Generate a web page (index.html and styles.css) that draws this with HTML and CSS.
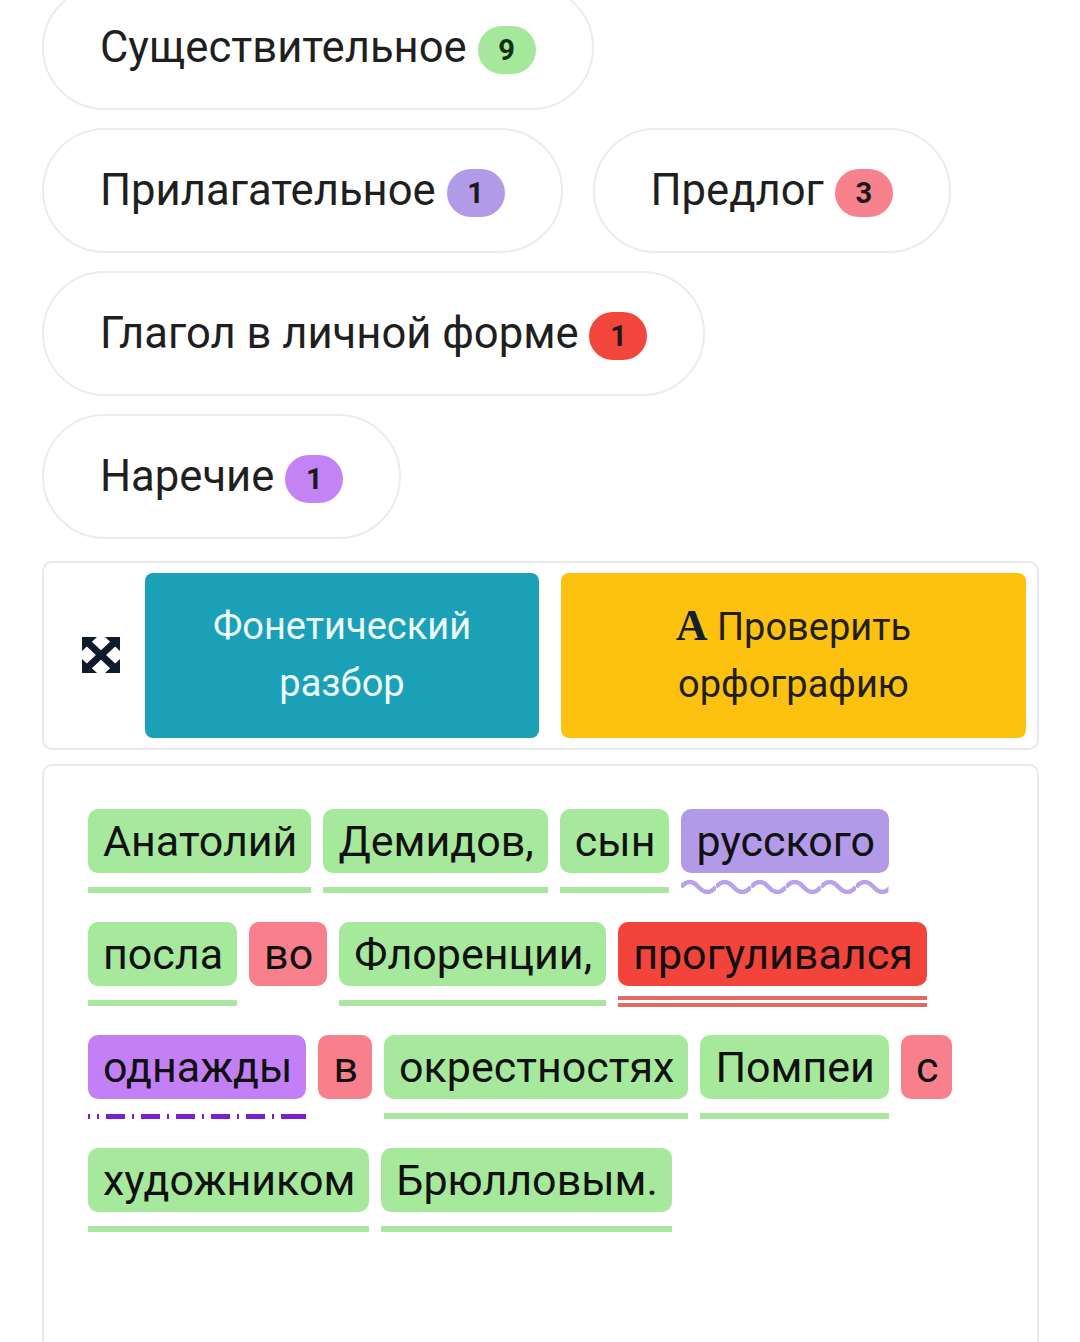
FILE: index.html
```html
<!DOCTYPE html>
<html lang="ru">
<head>
<meta charset="utf-8">
<title>Разбор</title>
<link rel="stylesheet" href="styles.css">
</head>
<body>
<div class="page">
  <div class="pills">
    <div class="pill">Существительное <span class="badge b-noun">9</span></div>
    <div class="pill">Прилагательное <span class="badge b-adj">1</span></div>
    <div class="pill">Предлог <span class="badge b-prep">3</span></div>
    <div class="pill">Глагол в личной форме <span class="badge b-verb">1</span></div>
    <div class="pill">Наречие <span class="badge b-adv">1</span></div>
  </div>

  <div class="toolbar">
    <div class="tool-icon">
      <svg width="38" height="36" viewBox="0 0 38 36">
        <g fill="#0f1b2d">
          <polygon points="0,0 15,0 0,14"/>
          <polygon points="38,0 23,0 38,14"/>
          <polygon points="0,36 15,36 0,22"/>
          <polygon points="38,36 23,36 38,22"/>
        </g>
        <g stroke="#0f1b2d" stroke-width="7" stroke-linecap="butt">
          <line x1="4" y1="4" x2="34" y2="32"/>
          <line x1="34" y1="4" x2="4" y2="32"/>
        </g>
      </svg>
    </div>
    <div class="btn btn-blue"><span class="btn-label">Фонетический<br>разбор</span></div>
    <div class="btn btn-yellow"><span class="btn-label"><span class="serif-a">A</span> Проверить<br>орфографию</span></div>
  </div>

  <div class="text-panel">
    <div class="words">
      <div class="word noun"><span class="tok">Анатолий</span><span class="ul"></span></div>
      <div class="word noun"><span class="tok">Демидов,</span><span class="ul"></span></div>
      <div class="word noun"><span class="tok">сын</span><span class="ul"></span></div>
      <div class="word adj"><span class="tok">русского</span>
        <svg class="wave" height="14"><defs><pattern id="zz" width="35" height="14" patternUnits="userSpaceOnUse"><path d="M0,7 Q8.75,-3 17.5,7 T35,7" fill="none" stroke="#b9a1ec" stroke-width="4.5"/></pattern></defs><rect width="100%" height="14" fill="url(#zz)"/></svg>
      </div>
      <div class="word noun"><span class="tok">посла</span><span class="ul"></span></div>
      <div class="word prep"><span class="tok">во</span></div>
      <div class="word noun"><span class="tok">Флоренции,</span><span class="ul"></span></div>
      <div class="word verb"><span class="tok">прогуливался</span><span class="ul"></span></div>
      <div class="word adv"><span class="tok">однажды</span><span class="ul"></span></div>
      <div class="word prep"><span class="tok">в</span></div>
      <div class="word noun"><span class="tok">окрестностях</span><span class="ul"></span></div>
      <div class="word noun"><span class="tok">Помпеи</span><span class="ul"></span></div>
      <div class="word prep"><span class="tok">с</span></div>
      <div class="word noun"><span class="tok">художником</span><span class="ul"></span></div>
      <div class="word noun"><span class="tok">Брюлловым.</span><span class="ul"></span></div>
    </div>
  </div>
</div>
</body>
</html>
```

FILE: styles.css
```css
* { box-sizing: border-box; }
html, body { margin: 0; padding: 0; background: #ffffff; }
body {
  font-family: Roboto, "Noto Sans", "Liberation Sans", sans-serif;
  color: #1c1c1c;
  overflow: hidden;
  height: 1342px;
}
.page {
  padding: 0 41px 0 42px;
  margin-top: -15px;
}
.pills {
  display: flex;
  flex-wrap: wrap;
  column-gap: 30px;
  row-gap: 18px;
}
.pill {
  height: 125px;
  border: 2px solid #ececec;
  border-radius: 63px;
  padding: 0 56px 0 56px;
  display: flex;
  align-items: center;
  font-size: 43.6px;
  color: #1f1f1f;
  white-space: pre;
}
.badge {
  display: inline-flex;
  align-items: center;
  justify-content: center;
  width: 58px;
  height: 48px;
  border-radius: 24px;
  font-size: 29px;
  font-weight: 700;
  color: #1a1a1a;
  margin-top: 4px;
}
.b-noun { background: #a6e89b; color: #10300f; }
.b-adj { background: #b39ae8; }
.b-prep { background: #f7828e; }
.b-verb { background: #f2453b; }
.b-adv { background: #c383f5; }

.toolbar {
  margin-top: 22px;
  border: 2px solid #e8e8e8;
  border-radius: 10px;
  height: 189px;
  padding: 10px 11px 10px 0;
  display: flex;
  align-items: stretch;
  gap: 22px;
}
.tool-icon {
  flex: none;
  width: 79px;
  display: flex;
  align-items: center;
  justify-content: flex-end;
  padding-right: 3px;
  padding-bottom: 2px;
}
.btn {
  border-radius: 8px;
  display: flex;
  align-items: center;
  justify-content: center;
  text-align: center;
  font-size: 38px;
  line-height: 57px;
  padding-bottom: 2px;
}
.btn-blue {
  width: 394px;
  flex: none;
  background: #1aa1b7;
  color: #eefafb;
}
.btn-yellow {
  flex: 1;
  background: #fdc10f;
  color: #1f1f1f;
}
.serif-a {
  font-family: "Liberation Serif", "DejaVu Serif", serif;
  font-weight: 700;
  font-size: 44px;
  color: #14202f;
}

.text-panel {
  margin-top: 14px;
  border: 2px solid #e8e8e8;
  border-radius: 10px;
  height: 700px;
  padding: 43px 40px 0 44px;
}
.words {
  display: flex;
  flex-wrap: wrap;
  column-gap: 12px;
  row-gap: 28px;
}
.word {
  display: flex;
  flex-direction: column;
  height: 85px;
}
.tok {
  display: block;
  height: 64px;
  line-height: 64px;
  padding: 0 14px 0 15px;
  border-radius: 10px;
  font-size: 43px;
  color: #111111;
  white-space: nowrap;
}
.noun .tok { background: #a6e99c; }
.adj .tok { background: #b39ae8; }
.prep .tok { background: #f7808c; }
.verb .tok { background: #f2443a; }
.adv .tok { background: #c380f6; }

.ul { display: block; }
.noun .ul {
  margin-top: 14px;
  height: 6px;
  background: #a9e6a0;
}
.wave {
  display: block;
  margin-top: 7px;
  width: 0;
  min-width: 100%;
  height: 14px;
}
.verb .ul {
  margin-top: 10px;
  height: 11px;
  border-top: 4px solid #e06a64;
  border-bottom: 4px solid #e06a64;
}
.adv .ul {
  margin-top: 15px;
  height: 5px;
  background: repeating-linear-gradient(90deg, #7a1fd0 0 19px, transparent 19px 26px, #7a1fd0 26px 28px, transparent 28px 35px);
  background-position: -17px 0;
}
```
